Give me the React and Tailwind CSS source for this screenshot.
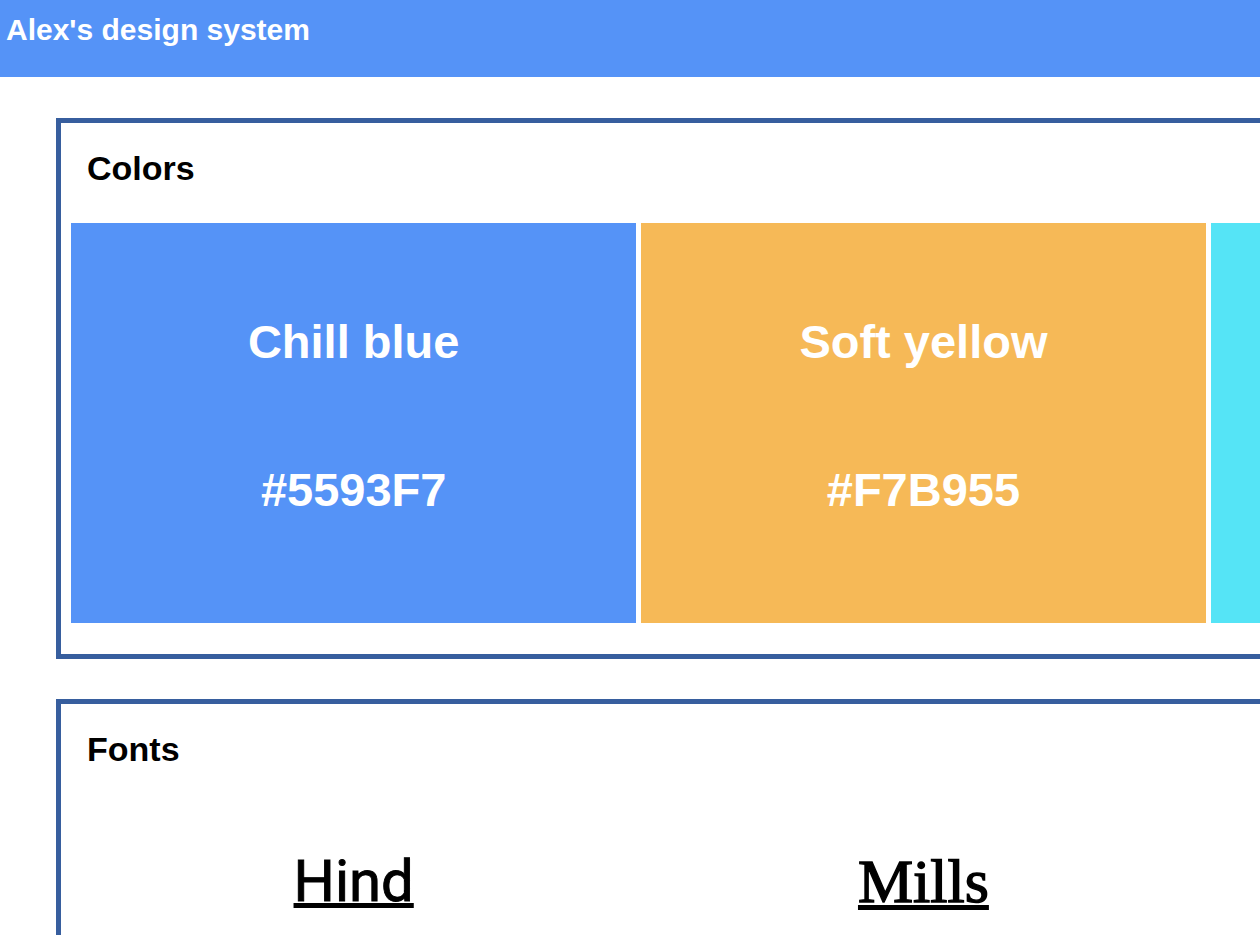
const colors = [
  { name: 'Chill blue', hex: '#5593F7', bg: 'bg-[#5593F7]' },
  { name: 'Soft yellow', hex: '#F7B955', bg: 'bg-[#F6B957]' },
  { name: 'Bright cyan', hex: '#55E4F7', bg: 'bg-[#55E4F6]' },
];

function Section({ title, children }) {
  return (
    <section className="ml-[56px] w-[1760px] border-[5px] border-[#375E9E] px-[10px]">
      <h2 className="pl-[16px] pt-[26px] text-[34px] font-bold leading-[39px] text-black">{title}</h2>
      {children}
    </section>
  );
}

export default function App() {
  return (
    <div className="min-h-screen w-full overflow-hidden bg-white font-['Liberation_Sans',Arial,sans-serif]">
      <header className="h-[77px] bg-[#5593F7] pl-[6px] pt-[12px]">
        <h1 className="text-[30px] font-bold leading-[35px] text-white">Alex's design system</h1>
      </header>

      <main className="flex flex-col gap-[40px] pt-[41px] pb-10">
        <Section title="Colors">
          <div className="mt-[35px] mb-[31px] flex gap-[4.5px]">
            {colors.map((c) => (
              <div
                key={c.hex}
                className={`${c.bg} flex h-[400px] w-[565.3px] shrink-0 flex-col items-center pt-[92px] text-white`}
              >
                <h3 className="text-[47px] font-bold leading-[54px]">{c.name}</h3>
                <p className="mt-[94px] text-[47px] font-bold leading-[54px]">{c.hex}</p>
              </div>
            ))}
          </div>
        </Section>

        <Section title="Fonts">
          <div className="mt-[35px] mb-[31px] flex gap-[4.5px]">
            <div className="flex h-[300px] w-[565.3px] shrink-0 justify-center pt-[42px]">
              <span className="font-['Roboto',sans-serif] text-[58px] leading-[70px] text-black underline decoration-[5px] underline-offset-[2px] [-webkit-text-stroke:0.9px_black]">
                Hind
              </span>
            </div>
            <div className="flex h-[300px] w-[565.3px] shrink-0 justify-center pt-[42px]">
              <span className="font-['Liberation_Serif',serif] text-[62px] leading-[70px] text-black underline decoration-[5px] underline-offset-[3px] [-webkit-text-stroke:1.4px_black]">
                Mills
              </span>
            </div>
            <div className="flex h-[300px] w-[565.3px] shrink-0 justify-center pt-[42px]">
              <span className="font-['Liberation_Mono',monospace] text-[58px] leading-[70px] text-black underline decoration-[5px] underline-offset-[2px]">
                Mono
              </span>
            </div>
          </div>
        </Section>
      </main>
    </div>
  );
}
